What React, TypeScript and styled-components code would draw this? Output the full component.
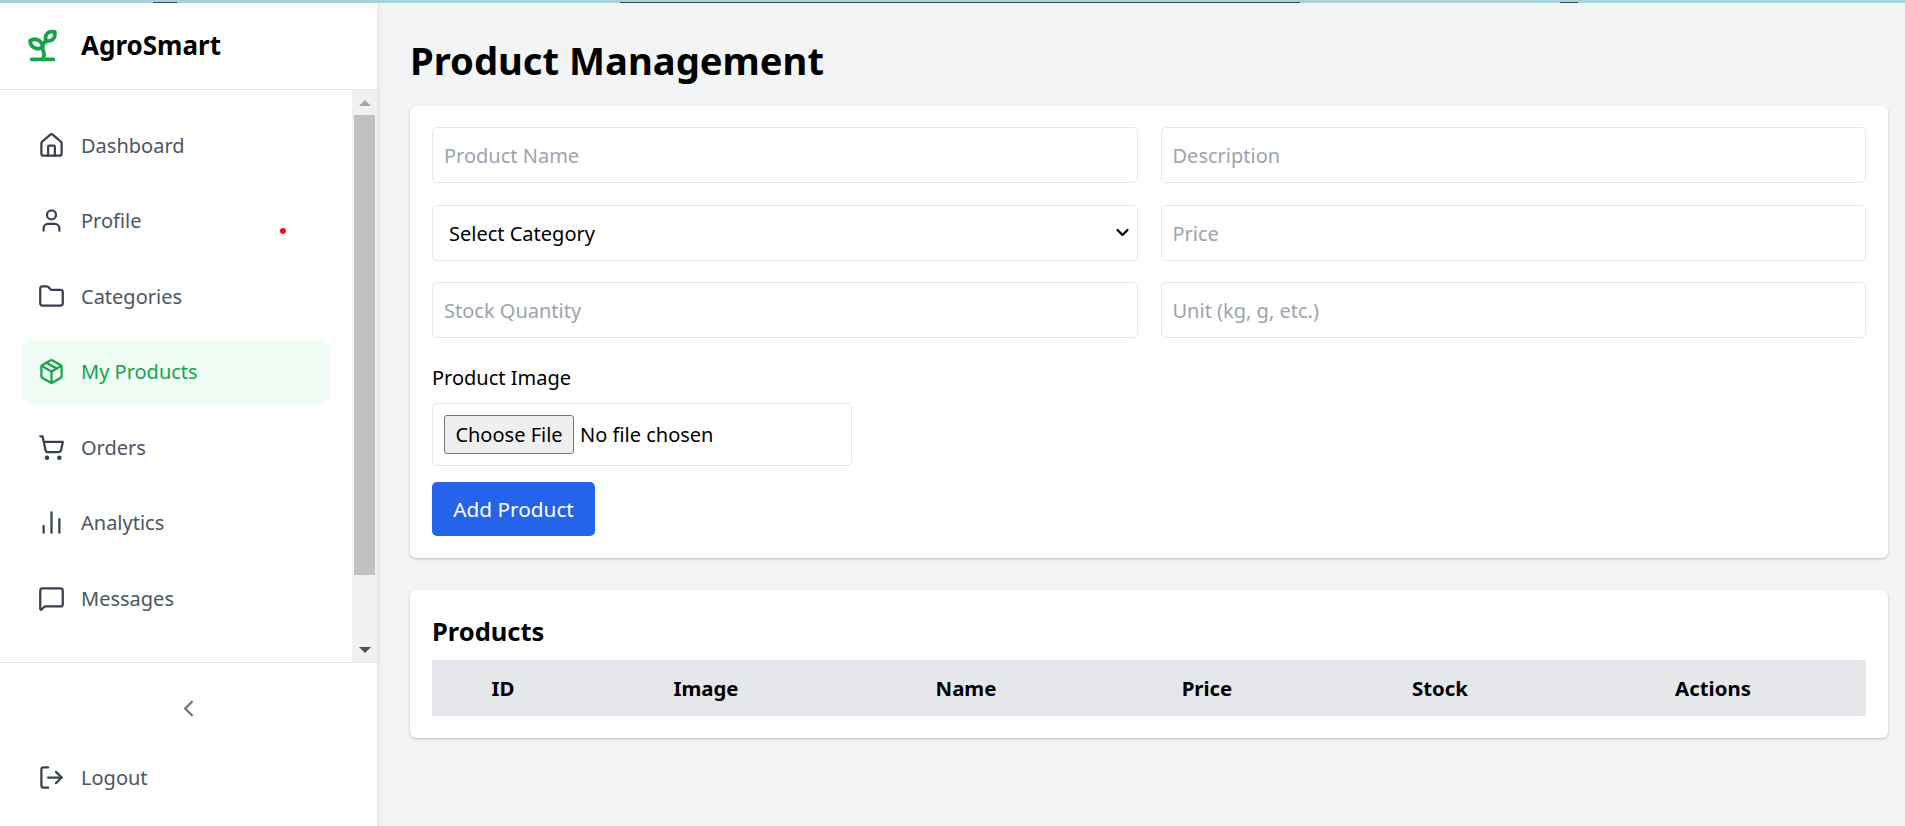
import React from "react";
import styled, { createGlobalStyle } from "styled-components";
import {
  BarChart2,
  ChevronLeft,
  Folder,
  Home,
  LogOut,
  MessageSquare,
  Package,
  Settings,
  ShoppingCart,
  Sprout,
  User,
} from "lucide-react";

const FONT = `"Noto Sans", "Open Sans", sans-serif`;

const chevronSvg = encodeURIComponent(
  `<svg xmlns="http://www.w3.org/2000/svg" width="25" height="25" viewBox="0 0 20 20" fill="none"><path d="M6 8l4 4 4-4" stroke="#000" stroke-width="1.8" stroke-linecap="round" stroke-linejoin="round"/></svg>`
);

const GlobalStyle = createGlobalStyle`
  * { box-sizing: border-box; }
  html, body { margin: 0; height: 100%; overflow: hidden; }
  body { font-family: ${FONT}; background: #f3f4f6; color: #000; }
`;

const navItems = [
  { label: "Dashboard", icon: Home },
  { label: "Profile", icon: User, dot: true },
  { label: "Categories", icon: Folder },
  { label: "My Products", icon: Package, active: true },
  { label: "Orders", icon: ShoppingCart },
  { label: "Analytics", icon: BarChart2 },
  { label: "Messages", icon: MessageSquare },
  { label: "Settings", icon: Settings },
];

const columns = [
  { label: "ID", width: 142 },
  { label: "Image", width: 264 },
  { label: "Name", width: 256 },
  { label: "Price", width: 226 },
  { label: "Stock", width: 240 },
  { label: "Actions", width: 306 },
];

const App = () => {
  return (
    <Page>
      <GlobalStyle />
      <TopStrip>
        <StripDark $left={153} $width={24} />
        <StripDark $left={620} $width={680} />
        <StripDark $left={1300} $width={225} $light />
        <StripDark $left={1560} $width={18} />
      </TopStrip>
      <Body>
        <Sidebar>
          <Brand>
            <Sprout size={37} color="#16a34a" strokeWidth={2.5} />
            <BrandName>AgroSmart</BrandName>
          </Brand>
          <NavArea>
            <Nav>
              {navItems.map(({ label, icon: Icon, active, dot }) => (
                <NavItem key={label} $active={active}>
                  <Icon size={27} strokeWidth={2} />
                  <span>{label}</span>
                  {dot && <RedDot />}
                </NavItem>
              ))}
            </Nav>
            <ScrollRail>
              <ScrollButton>
                <ArrowUp />
              </ScrollButton>
              <ScrollThumb />
              <ScrollGap />
              <ScrollButton>
                <ArrowDown />
              </ScrollButton>
            </ScrollRail>
          </NavArea>
          <SideFooter>
            <CollapseBtn>
              <ChevronLeft size={27} strokeWidth={2} />
            </CollapseBtn>
            <LogoutBtn>
              <LogOut size={27} strokeWidth={2} />
              <span>Logout</span>
            </LogoutBtn>
          </SideFooter>
        </Sidebar>
        <Main>
          <Title>Product Management</Title>
          <FormCard>
            <FieldGrid>
              <TextInput placeholder="Product Name" />
              <TextInput placeholder="Description" />
              <CategorySelect defaultValue="">
                <option value="">Select Category</option>
              </CategorySelect>
              <TextInput placeholder="Price" />
              <TextInput placeholder="Stock Quantity" />
              <TextInput placeholder="Unit (kg, g, etc.)" />
            </FieldGrid>
            <FileLabel>Product Image</FileLabel>
            <FileBox>
              <ChooseBtn type="button">Choose File</ChooseBtn>
              <span>No file chosen</span>
            </FileBox>
            <AddBtn type="button">Add Product</AddBtn>
          </FormCard>
          <TableCard>
            <SectionTitle>Products</SectionTitle>
            <Table>
              <thead>
                <tr>
                  {columns.map((c) => (
                    <Th key={c.label} $width={c.width}>
                      {c.label}
                    </Th>
                  ))}
                </tr>
              </thead>
            </Table>
          </TableCard>
        </Main>
      </Body>
    </Page>
  );
};

export default App;

const Page = styled.div`
  width: 1905px;
  height: 826px;
  display: flex;
  flex-direction: column;
  overflow: hidden;
`;

const TopStrip = styled.div`
  position: relative;
  flex: none;
  height: 3px;
  background: #a5d4d8;
`;

const StripDark = styled.div<{ $left: number; $width: number; $light?: boolean }>`
  position: absolute;
  left: ${(p) => p.$left}px;
  width: ${(p) => p.$width}px;
  top: 2px;
  height: 1px;
  background: ${(p) => (p.$light ? "#c4c9ca" : "#39474a")};
`;

const Body = styled.div`
  flex: 1;
  min-height: 0;
  display: flex;
`;

const Sidebar = styled.aside`
  flex: none;
  width: 377px;
  display: flex;
  flex-direction: column;
  background: #fff;
  box-shadow: 0 2px 8px rgba(0, 0, 0, 0.12);
`;

const Brand = styled.div`
  flex: none;
  height: 87px;
  display: flex;
  align-items: center;
  gap: 20px;
  padding: 0 0 2px 24px;
  border-bottom: 1px solid #e5e7eb;
`;

const BrandName = styled.div`
  font-size: 26px;
  font-weight: 700;
`;

const NavArea = styled.div`
  flex: 1;
  min-height: 0;
  display: flex;
`;

const Nav = styled.nav`
  flex: 1;
  min-width: 0;
  overflow: hidden;
  padding: 23px 22px 32px;
  display: flex;
  flex-direction: column;
  gap: 11.6px;
`;

const NavItem = styled.a<{ $active?: boolean }>`
  position: relative;
  flex: none;
  height: 64px;
  display: flex;
  align-items: center;
  gap: 16px;
  padding: 0 16px;
  border-radius: 12px;
  font-size: 20px;
  color: ${(p) => (p.$active ? "#16a34a" : "#4b5563")};
  background: ${(p) => (p.$active ? "#f0fdf4" : "transparent")};

  svg {
    flex: none;
    color: ${(p) => (p.$active ? "#16a34a" : "#374151")};
  }
`;

const RedDot = styled.i`
  position: absolute;
  left: 258px;
  top: 39px;
  width: 6px;
  height: 6px;
  border-radius: 50%;
  background: #ef1111;
`;

const ScrollRail = styled.div`
  flex: none;
  width: 25px;
  display: flex;
  flex-direction: column;
  background: #f1f1f1;
`;

const ScrollButton = styled.div`
  flex: none;
  height: 25px;
  display: flex;
  align-items: center;
  justify-content: center;
`;

const ArrowUp = styled.i`
  width: 0;
  height: 0;
  border-left: 6px solid transparent;
  border-right: 6px solid transparent;
  border-bottom: 6px solid #a3a3a3;
`;

const ArrowDown = styled.i`
  width: 0;
  height: 0;
  border-left: 6px solid transparent;
  border-right: 6px solid transparent;
  border-top: 6px solid #505050;
`;

const ScrollThumb = styled.div`
  flex: none;
  height: 460px;
  margin: 0 2px 0 2px;
  background: #c1c1c1;
`;

const ScrollGap = styled.div`
  flex: 1;
`;

const SideFooter = styled.div`
  flex: none;
  height: 164px;
  border-top: 1px solid #e5e7eb;
  display: flex;
  flex-direction: column;
`;

const CollapseBtn = styled.div`
  flex: none;
  height: 91px;
  display: flex;
  align-items: center;
  justify-content: center;
  color: #6b7280;
`;

const LogoutBtn = styled.div`
  flex: none;
  display: flex;
  align-items: center;
  gap: 16px;
  height: 46px;
  padding-left: 38px;
  font-size: 20px;
  color: #4b5563;

  svg {
    flex: none;
    color: #374151;
  }
`;

const Main = styled.main`
  flex: 1;
  min-width: 0;
  padding: 33px 17px 0 33px;
  display: flex;
  flex-direction: column;
`;

const Title = styled.h1`
  margin: 0 0 21px;
  height: 49px;
  line-height: 49px;
  font-size: 38.2px;
  font-weight: 700;
`;

const Card = styled.section`
  flex: none;
  background: #fff;
  border-radius: 6px;
  padding: 21px 22px;
  box-shadow: 0 1px 3px rgba(0, 0, 0, 0.16), 0 1px 2px rgba(0, 0, 0, 0.08);
`;

const FormCard = styled(Card)`
  height: 452px;
`;

const FieldGrid = styled.div`
  display: grid;
  grid-template-columns: 1fr 1fr;
  gap: 21.5px 23px;
`;

const fieldBase = `
  height: 56px;
  width: 100%;
  border: 1px solid #e5e7eb;
  border-radius: 5px;
  background-color: #fff;
  font-family: ${FONT};
  font-size: 20px;
  outline: none;
`;

const TextInput = styled.input`
  ${fieldBase}
  padding: 1px 11px 0;
  color: #000;

  &::placeholder {
    color: #9ca3af;
    opacity: 1;
  }
`;

const CategorySelect = styled.select`
  ${fieldBase}
  appearance: none;
  padding: 1px 16px 0;
  color: #000;
  background-image: url("data:image/svg+xml,${chevronSvg}");
  background-repeat: no-repeat;
  background-position: right 2px center;
`;

const FileLabel = styled.div`
  margin-top: 25.5px;
  height: 27px;
  line-height: 27px;
  font-size: 20px;
`;

const FileBox = styled.div`
  margin-top: 12.5px;
  width: 420px;
  height: 63px;
  display: flex;
  align-items: center;
  gap: 6px;
  padding: 0 11px;
  border: 1px solid #e5e7eb;
  border-radius: 5px;
  font-size: 20px;
`;

const ChooseBtn = styled.button`
  width: 130px;
  height: 39px;
  padding: 0;
  border: 1px solid #767676;
  border-radius: 3px;
  background: #efefef;
  font-family: ${FONT};
  font-size: 20px;
  color: #000;
`;

const AddBtn = styled.button`
  display: block;
  margin-top: 16px;
  width: 163px;
  height: 54px;
  padding: 0;
  border: none;
  border-radius: 5px;
  background: #2563eb;
  color: #fff;
  font-family: ${FONT};
  font-size: 20.8px;
`;

const TableCard = styled(Card)`
  margin-top: 32px;
  height: 148px;
`;

const SectionTitle = styled.h2`
  margin: 0;
  height: 49px;
  padding-top: 4px;
  line-height: 33px;
  font-size: 25.5px;
  font-weight: 700;
`;

const Table = styled.table`
  width: 1434px;
  table-layout: fixed;
  border-collapse: collapse;
`;

const Th = styled.th<{ $width: number }>`
  width: ${(p) => p.$width}px;
  height: 56px;
  padding: 0;
  background: #e5e7eb;
  font-size: 20.4px;
  font-weight: 700;
  text-align: center;
`;
